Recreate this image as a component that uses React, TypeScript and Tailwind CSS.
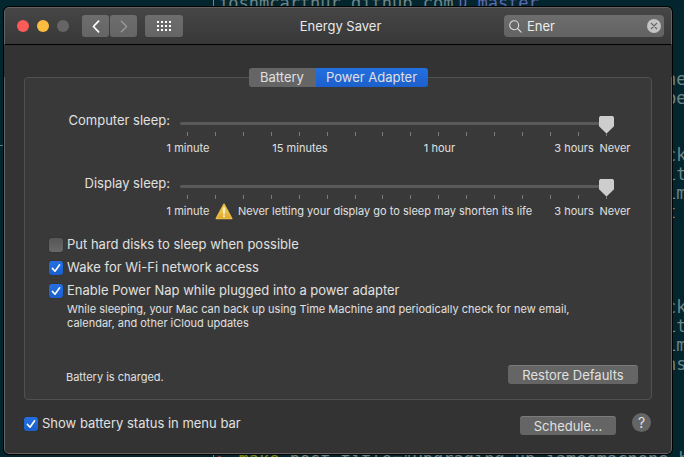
import React from 'react';

const TERMINAL_ROWS = [
    '', '', '', '', 'ne', 'be', '', '', 'ck', 'it', 'im', 't', '', '', '', '', 'ck', 'it', 'im', 'ns', '', '', '', '',
];

const TICKS = Array.from({ length: 16 }, (_, i) => i);

interface CheckOptionProps {
    id: string;
    label: string;
    checked?: boolean;
}

const CheckOption: React.FC<CheckOptionProps> = ({ id, label, checked = false }) => {
    return (
        <div className="flex h-4 items-center gap-1">
            <span className="grid size-[14px] shrink-0">
                <input
                    id={id}
                    type="checkbox"
                    defaultChecked={checked}
                    className="peer col-start-1 row-start-1 size-[14px] appearance-none rounded-[3px] bg-linear-to-b from-[#565656] to-[#686868] shadow-[0_0_1px_#222] checked:from-[#2570e2] checked:to-[#1a5fcb]"
                />
                <svg viewBox="0 0 14 14" className="pointer-events-none invisible col-start-1 row-start-1 size-[14px] peer-checked:visible">
                    <path d="M3.4 7.4 L6 10.2 L10.6 3.8" fill="none" stroke="#fff" strokeWidth="1.6" strokeLinecap="round" strokeLinejoin="round" />
                </svg>
            </span>
            <label htmlFor={id} className="whitespace-nowrap">{label}</label>
        </div>
    );
};

interface SleepSliderProps {
    id: string;
    label: string;
    children: React.ReactNode; // Scale captions under the ticks
}

const SleepSlider: React.FC<SleepSliderProps> = ({ id, label, children }) => {
    return (
        <div className="flex gap-[10px]">
            <label htmlFor={id} className="w-[121px] shrink-0 text-right leading-4">{label}</label>
            <div className="min-w-0 flex-1 pt-[2px]">
                <input
                    id={id}
                    type="range"
                    min={0}
                    max={15}
                    defaultValue={15}
                    className="block h-[19px] w-full appearance-none bg-transparent [&::-webkit-slider-runnable-track]:h-[3px] [&::-webkit-slider-runnable-track]:rounded-full [&::-webkit-slider-runnable-track]:bg-[#5a5a5a] [&::-webkit-slider-thumb]:-mt-[6px] [&::-webkit-slider-thumb]:h-[17px] [&::-webkit-slider-thumb]:w-[15px] [&::-webkit-slider-thumb]:appearance-none [&::-webkit-slider-thumb]:bg-[#cdcdcd] [&::-webkit-slider-thumb]:[clip-path:polygon(0_8%,8%_0,92%_0,100%_8%,100%_60%,54%_100%,46%_100%,0_60%)]"
                />
                <div className="-mt-px flex justify-between px-[7px]">
                    {TICKS.map((tick) => (
                        <span key={tick} className="h-1 w-px bg-[#7a7a7a]" />
                    ))}
                </div>
                <div className="mt-[5px] -mr-[18px] -ml-4 flex text-center text-[11px] leading-[14px] whitespace-nowrap">
                    {children}
                </div>
            </div>
        </div>
    );
};

const WarningIcon = () => (
    <svg viewBox="0 0 18 17" className="h-[17px] w-[18px] shrink-0">
        <defs>
            <linearGradient id="warning" x1="0" y1="0" x2="0" y2="1">
                <stop offset="0" stopColor="#f6dc72" />
                <stop offset="1" stopColor="#e0a526" />
            </linearGradient>
        </defs>
        <path d="M9 1.2 L16.8 15.6 H1.2 Z" fill="url(#warning)" stroke="#e9bd45" strokeWidth="1.4" strokeLinejoin="round" />
        <path d="M9 5 V10.6 M9 12.8 V13.8" stroke="#fff8df" strokeWidth="1.6" strokeLinecap="round" />
    </svg>
);

const Toolbar = () => (
    <header className="grid h-[38px] grid-cols-[1fr_auto_1fr] items-center rounded-t-[5px] border border-[#626262] border-b-black bg-linear-to-b from-[#464646] to-[#383838] pr-[7px] pl-3">
        <div className="flex items-center">
            <div className="flex gap-2">
                <button aria-label="Close" className="size-3 rounded-full bg-[#fc5b57]" />
                <button aria-label="Minimize" className="size-3 rounded-full bg-[#fdbc40]" />
                <button aria-label="Zoom" className="size-3 rounded-full bg-[#656565]" />
            </div>
            <div className="ml-[13px] flex gap-px">
                <button aria-label="Back" className="flex h-[22px] w-[27px] items-center justify-center rounded-[3px] bg-linear-to-b from-[#6d6d6d] to-[#656565]">
                    <svg viewBox="0 0 8 13" className="h-[13px] w-2">
                        <path d="M6.6 1.2 L1.4 6.5 L6.6 11.8" fill="none" stroke="#fff" strokeWidth="1.7" strokeLinecap="round" strokeLinejoin="round" />
                    </svg>
                </button>
                <button aria-label="Forward" className="flex h-[22px] w-[27px] items-center justify-center rounded-[3px] bg-linear-to-b from-[#6d6d6d] to-[#656565]">
                    <svg viewBox="0 0 8 13" className="h-[13px] w-2">
                        <path d="M1.4 1.2 L6.6 6.5 L1.4 11.8" fill="none" stroke="#989898" strokeWidth="1.5" strokeLinecap="round" strokeLinejoin="round" />
                    </svg>
                </button>
            </div>
            <button aria-label="Show all" className="ml-2 flex h-[22px] w-[38px] items-center justify-center rounded-[3px] bg-linear-to-b from-[#6d6d6d] to-[#656565]">
                <svg viewBox="0 0 14 10" className="h-[10px] w-[14px]" fill="#fff">
                    {[0, 4, 8].map((y) => [0, 4, 8, 12].map((x) => <rect key={`${x}-${y}`} x={x} y={y} width="2" height="2" />))}
                </svg>
            </button>
        </div>
        <h1 className="text-[13px] leading-4 text-[#e8e8e8]">Energy Saver</h1>
        <div className="flex h-[22px] w-[160px] items-center justify-self-end rounded-[4px] bg-linear-to-b from-[#6d6d6d] to-[#626262] pr-[3px] pl-[5px]">
            <svg viewBox="0 0 13 13" className="size-[13px] shrink-0" fill="none" stroke="#dedede" strokeWidth="1.1" strokeLinecap="round">
                <circle cx="5.2" cy="5.2" r="4.5" />
                <path d="M8.5 8.5 L12.2 12.2" />
            </svg>
            <input aria-label="Search" type="text" defaultValue="Ener" className="ml-[5px] min-w-0 flex-1 bg-transparent text-[13px] leading-4 text-[#ececec] outline-none" />
            <button aria-label="Clear search" className="shrink-0">
                <svg viewBox="0 0 14 14" className="size-[14px]">
                    <circle cx="7" cy="7" r="7" fill="#c3c3c3" />
                    <path d="M4.4 4.4 L9.6 9.6 M9.6 4.4 L4.4 9.6" stroke="#646464" strokeWidth="1.3" strokeLinecap="round" />
                </svg>
            </button>
        </div>
    </header>
);

// Terminal that shows around the edges of the preferences window
const Terminal = () => (
    <div aria-hidden="true" className="absolute inset-0 overflow-hidden bg-[#03262e] font-['DejaVu_Sans_Mono',monospace] text-[17px] leading-[19px] whitespace-pre text-[#6f8587]">
        <div className="absolute inset-y-0 left-[213px] w-px bg-[#6f8587]" />
        <div className="absolute top-[145px] left-0 h-px w-[3px] bg-[#5c7678]" />
        <div className="absolute -top-[6px] left-[218px] flex items-center text-[#5f68b5]">
            <span className="text-[#6f8587]">joshmcarthur.github.com</span>
            <svg viewBox="0 0 8 16" className="mr-[10px] ml-[6px] h-4 w-2" fill="none" stroke="currentColor" strokeWidth="1.6">
                <path d="M1.5 1 V15 M6.5 3 V8 Q6.5 11 1.5 12" />
            </svg>
            <span>master</span>
        </div>
        <div className="absolute -top-[6px] right-0 w-[18px]">
            {TERMINAL_ROWS.map((row, i) => (
                <div key={i} className="h-[19px]">{row}</div>
            ))}
        </div>
        <div className="absolute top-[450px] left-[218px]">
            <span className="text-[#c43a1c]">▶</span> <span className="text-[#7d8a0c]">make</span> post title="Upgrading up jamesmachone back
        </div>
    </div>
);

const App: React.FC = () => {
    return (
        <div className="relative min-h-screen overflow-hidden pt-[7px] pr-3 pb-[3px] pl-1 font-['Inter',sans-serif] text-[13px] text-[#e0e0e0]">
            <Terminal />
            <main className="relative overflow-hidden rounded-[5px] bg-[#333333] shadow-[0_0_0_1px_#000]">
                <Toolbar />
                <div className="rounded-b-[5px] border-x border-b border-[#626262] px-[19px]">
                    <section className="mt-8 rounded-[4px] border border-[#505050] bg-[#393939] pb-[15px]">
                        <div role="tablist" className="mx-auto -mt-[10px] flex h-[19px] w-[179px] overflow-hidden rounded-[3px] leading-[19px]">
                            <button role="tab" aria-selected="false" className="w-[67px] bg-[#656565]">Battery</button>
                            <button role="tab" aria-selected="true" className="flex-1 bg-linear-to-b from-[#2370e1] to-[#1c60cc]">Power Adapter</button>
                        </div>

                        <div className="mt-[25px] flex flex-col gap-5 pr-[37px] pl-6">
                            <SleepSlider id="computer-sleep" label="Computer sleep:">
                                <span className="w-12">1 minute</span>
                                <span className="w-[176px]">15 minutes</span>
                                <span className="w-[103px]">1 hour</span>
                                <span className="ml-auto w-12">3 hours</span>
                                <span className="w-[34px]">Never</span>
                            </SleepSlider>
                            <SleepSlider id="display-sleep" label="Display sleep:">
                                <span className="w-12">1 minute</span>
                                <span className="-my-1 ml-[3px] flex items-center gap-[5px]">
                                    <WarningIcon />
                                    Never letting your display go to sleep may shorten its life
                                </span>
                                <span className="ml-auto w-12">3 hours</span>
                                <span className="w-[34px]">Never</span>
                            </SleepSlider>
                        </div>

                        <div className="mt-[19px] flex flex-col gap-[7px] pl-6">
                            <CheckOption id="hard-disks" label="Put hard disks to sleep when possible" />
                            <CheckOption id="wake-wifi" label="Wake for Wi-Fi network access" checked />
                            <CheckOption id="power-nap" label="Enable Power Nap while plugged into a power adapter" checked />
                        </div>
                        <p className="mt-[3px] ml-[42px] max-w-[520px] text-[11px] leading-[14px]">
                            While sleeping, your Mac can back up using Time Machine and periodically check for new email,
                            calendar, and other iCloud updates
                        </p>

                        <div className="mt-[34px] flex items-center justify-between pr-[13px] pl-[41px]">
                            <p className="pt-[6px] text-[11px] leading-[14px]">Battery is charged.</p>
                            <button className="h-[19px] w-[130px] rounded-[3px] border-t border-[#7c7c7c] bg-[#656565] leading-[18px]">Restore Defaults</button>
                        </div>
                    </section>

                    <footer className="flex items-start pt-[13px] pr-px pb-[18px]">
                        <div className="mt-[3px]">
                            <CheckOption id="battery-status" label="Show battery status in menu bar" checked />
                        </div>
                        <button className="mt-[3px] ml-auto h-[19px] w-24 rounded-[3px] border-t border-[#7c7c7c] bg-[#656565] leading-[18px]">Schedule...</button>
                        <button aria-label="Help" className="ml-4 size-[19px] rounded-full bg-[#656565] text-[14px] leading-[19px]">?</button>
                    </footer>
                </div>
            </main>
        </div>
    );
};

export default App;
